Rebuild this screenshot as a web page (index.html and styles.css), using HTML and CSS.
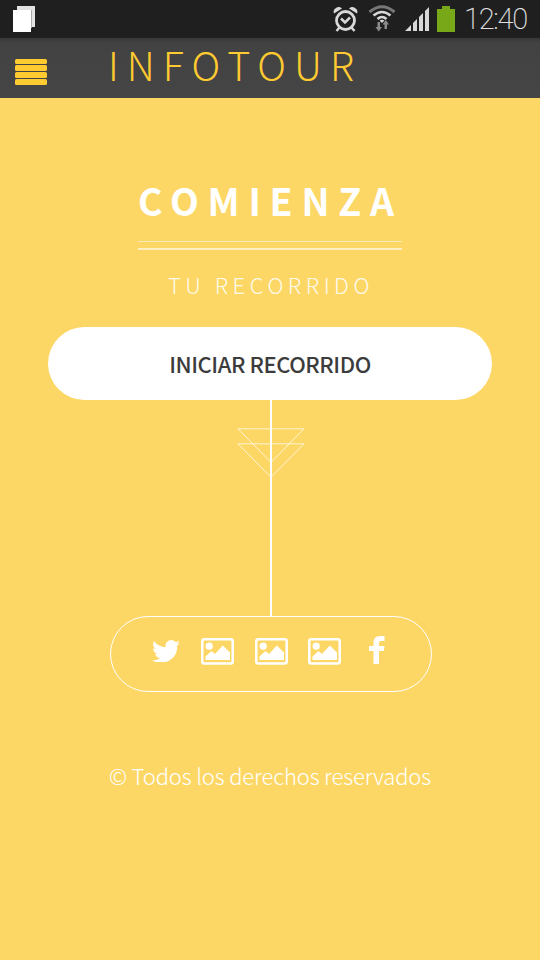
FILE: index.html
```html
<!DOCTYPE html>
<html lang="es">
<head>
<meta charset="utf-8">
<title>Infotour</title>
<link rel="stylesheet" href="styles.css">
</head>
<body>
<div class="status">
  <svg class="pages" width="24" height="28" viewBox="0 0 24 28"><path fill="#e2e2e4" d="M5 1h18v21H5z"/><path fill="#aaa" d="M19 5h1v18h-1z"/><path fill="#fff" d="M1 5h18v22H1z"/></svg>
  <svg class="alarm" width="26" height="28" viewBox="0 0 26 28"><g fill="none" stroke="#d8d8d8"><circle cx="12.500" cy="15.500" r="9" stroke-width="2.800"/><path stroke-width="2.500" d="M8 13.500l4 4 5-5"/><path stroke-width="2.500" d="M6.500 22.500l-3 3.500M18.500 22.500l3 3.500"/></g><path fill="#d8d8d8" d="M1 8.500Q-.5 5 3 3q3-2 6 .5zM24 8.500q1.500-3.500-2-5.500-3-2-6 .5z"/></svg>
  <svg class="wifi" width="28" height="30" viewBox="0 0 28 30"><g fill="none"><path stroke="#777" stroke-width="3" d="M1.500 8Q14-2.500 26.500 8"/><path stroke="#d8d8d8" stroke-width="2.600" d="M5.500 11.500q8.500-7 17 0M9.500 15q4.500-4 9 0"/></g><path fill="#d8d8d8" d="M11.500 16.500q2.500-1.500 5 0L14 19z"/><path fill="#8c8c8c" d="M9.500 18h2.500v5h2l-3.300 4.500L7.500 23h2zM16.500 25v-4.500h-2l3.300-4.500 3.200 4.500h-2V25z"/></svg>
  <svg class="signal" width="24" height="25" viewBox="0 0 24 25"><path fill="#d8d8d8" d="M0 24l6-6v6zM8 24v-8l4-4v12zM14 24V10l4-4v18zM20 24V4l4-4v24z"/></svg>
  <svg class="battery" width="18" height="26" viewBox="0 0 18 26"><path fill="#78a817" d="M0 3h5V0h8v3h5v23H0z"/></svg>
  <span class="clock">12:40</span>
</div>
<header class="bar">
  <div class="menu"><i></i><i></i><i></i><i></i></div>
  <h1 class="brand">INFOTOUR</h1>
</header>
<main>
  <h2 class="title">COMIENZA</h2>
  <div class="rules"></div>
  <p class="subtitle">TU RECORRIDO</p>
  <button class="start">INICIAR RECORRIDO</button>
  <svg class="stem" width="70" height="216" viewBox="0 0 70 216"><path fill="none" stroke="#fff" stroke-opacity=".7" d="M2 28.800H68L35 62.300zM2 43.800H68L35 77.300z"/><path fill="#fff" d="M34 0h2v216h-2z"/></svg>
  <nav class="social">
    <svg class="twitter" width="28" height="23" viewBox="0 0 24 20.500" preserveAspectRatio="none"><path fill="#fff" d="M24 3.500a10 10 0 0 1-2.800.8 5 5 0 0 0 2.100-2.900 9.500 9.500 0 0 1-3.100 1.300A4.900 4.900 0 0 0 11.800 7.300 14 14 0 0 1 1.700 2a5 5 0 0 0 1.500 6.800A4.900 4.900 0 0 1 1 8.200a5 5 0 0 0 3.900 5 5 5 0 0 1-2.200.1 4.900 4.900 0 0 0 4.600 3.500A10 10 0 0 1 0 19a14 14 0 0 0 21.500-13A10 10 0 0 0 24 3.500z"/></svg>
    <svg class="photo" width="33" height="27" viewBox="0 0 33 27"><use href="#photo"/></svg>
    <svg class="photo" width="33" height="27" viewBox="0 0 33 27"><use href="#photo"/></svg>
    <svg class="photo last" width="33" height="27" viewBox="0 0 33 27"><g id="photo"><rect x="1.300" y="1.300" width="30.400" height="24.200" rx="2" fill="none" stroke="#fff" stroke-width="2.500"/><circle cx="8.200" cy="8.200" r="3.600" fill="#fff"/><path fill="#fff" d="M4.500 22v-3.500l6-5.500 3.500 3 7.800-8.500 7.200 7v7.500z"/></g></svg>
    <svg class="facebook" width="16" height="28" viewBox="0 0 16 28"><path fill="#fff" d="M4.500 28V15H0v-5h4.500V6.500Q4.500 0 11 0h4.500v5H12q-2 0-2 2v3h5.500l-.7 5H10v13z"/></svg>
  </nav>
  <footer class="copy">© Todos los derechos reservados</footer>
</main>
</body>
</html>
```
FILE: styles.css
```css
* { box-sizing: border-box; margin: 0; }
body {
  width: 540px;
  height: 960px;
  overflow: hidden;
  background: #fdd766;
  font-family: "Noto Sans CJK JP", "Noto Sans", sans-serif;
  color: #fff;
}
svg { display: block; flex: none; }
.status {
  height: 38px;
  background: #1f1f1f;
  display: flex;
  align-items: flex-start;
  padding-left: 12px;
}
.pages { margin-top: 5px; }
.alarm { margin: 5px 0 0 297px; }
.wifi { margin: 4px 0 0 9px; }
.signal { margin: 7px 0 0 9px; }
.battery { margin: 6px 0 0 8px; }
.clock {
  margin-left: 9px;
  font: 200 29px/38px Roboto, sans-serif;
  letter-spacing: -1.300px;
  color: #e0e0e0;
  white-space: nowrap;
}
.bar {
  height: 60px;
  background: linear-gradient(#383838, #424242 5px, #454545);
  display: flex;
  align-items: flex-start;
  padding-left: 15px;
}
.menu { width: 32px; padding-top: 20.500px; display: grid; gap: 1.500px; }
.menu i { height: 5.400px; border-radius: 1.500px; background: #ffcb31; }
.brand {
  margin-left: 61px;
  font-size: 39.500px;
  font-weight: 300;
  line-height: 52px;
  letter-spacing: 8.050px;
  color: #ffcb31;
  white-space: nowrap;
}
main { display: flex; flex-direction: column; align-items: center; }
.title {
  align-self: flex-start;
  margin: 75px 0 0 138px;
  font-size: 37.500px;
  font-weight: 700;
  line-height: 54px;
  letter-spacing: 8.800px;
  white-space: nowrap;
}
.rules {
  width: 264px;
  height: 9px;
  margin-top: 14px;
  border-top: 1px solid rgba(255,255,255,.5);
  border-bottom: 2px solid rgba(255,255,255,.6);
}
.subtitle {
  align-self: flex-start;
  margin: 18px 0 0 168px;
  font-size: 22px;
  font-weight: 300;
  line-height: 32px;
  letter-spacing: 4.500px;
  color: rgba(255,255,255,.9);
  white-space: nowrap;
}
.start {
  width: 444px;
  height: 73px;
  margin-top: 27px;
  padding: 0;
  border: 0;
  border-radius: 37px;
  background: #fff;
  color: #3c3c3c;
  font: 500 22px/73px "Noto Sans CJK JP", sans-serif;
  letter-spacing: -.440px;
}
.stem { margin-left: 2px; }
.social {
  width: 322px;
  height: 76px;
  margin-left: 2px;
  border: 1.300px solid #fff;
  border-radius: 38px;
  display: flex;
  align-items: flex-start;
  padding: 21px 0 0 41px;
}
.twitter { margin: 1px 21px 0 0; }
.photo { margin-right: 21px; }
.photo + .photo { margin-right: 19.500px; }
.photo.last { margin-right: 28.500px; }
.facebook { margin-top: -2px; }
.copy {
  margin-top: 67px;
  font-size: 22px;
  font-weight: 300;
  line-height: 32px;
  letter-spacing: -.170px;
  white-space: nowrap;
}
```
